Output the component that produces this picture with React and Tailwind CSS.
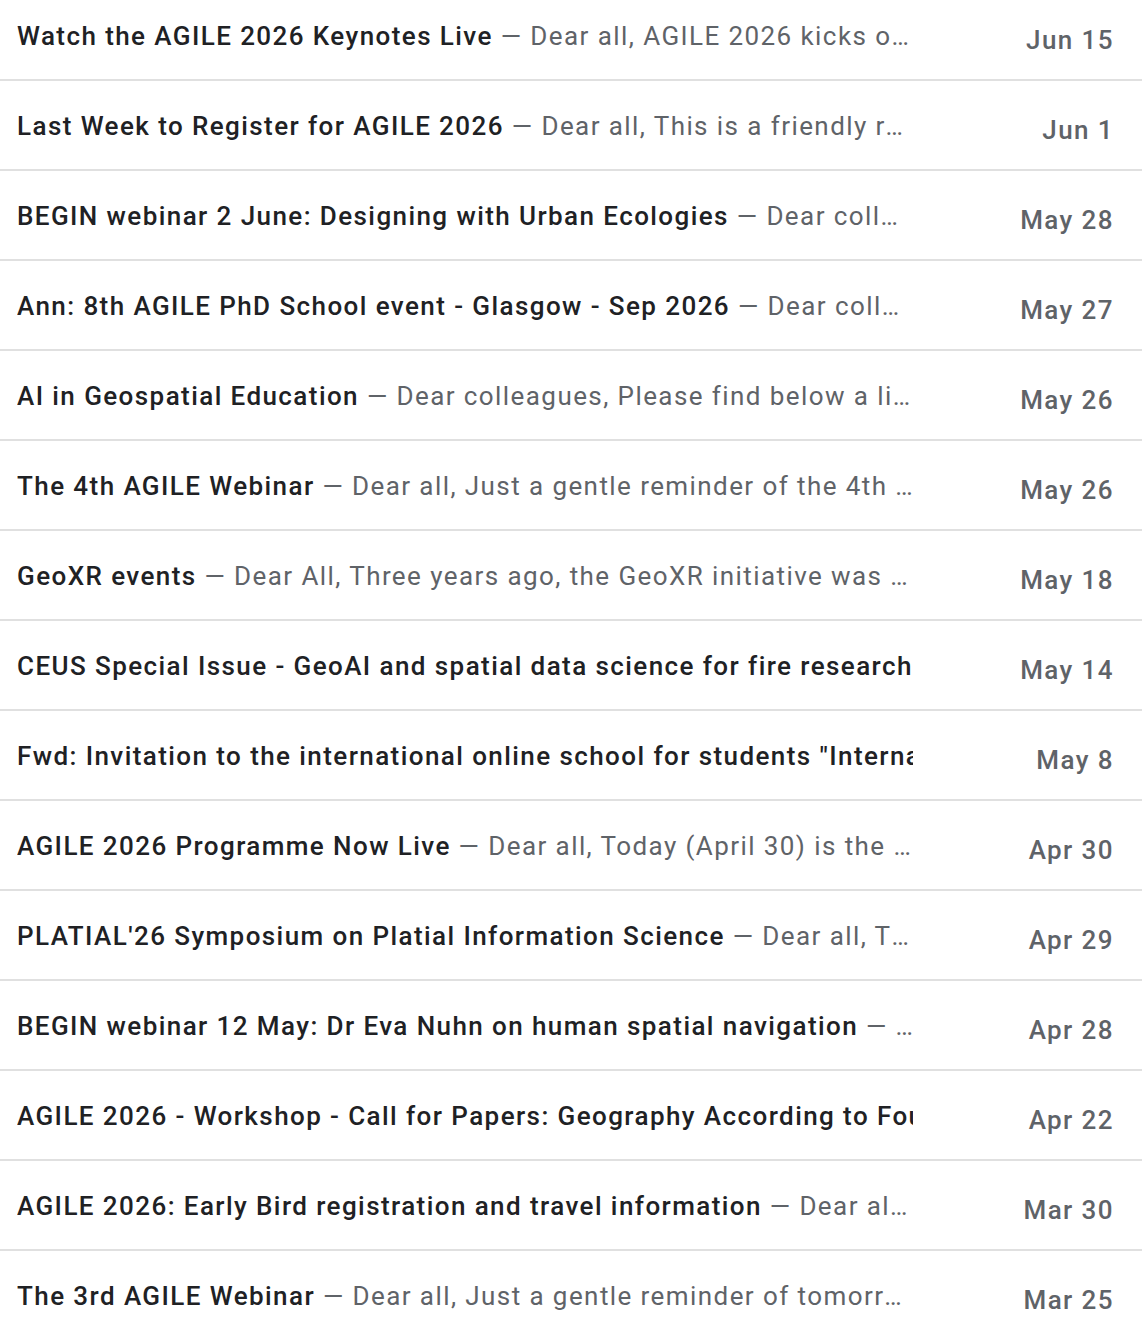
import React from 'react'

const messages = [
  { title: 'Watch the AGILE 2026 Keynotes Live', snippet: 'Dear all, AGILE 2026 kicks off next week and all keynotes will be streamed live', date: 'Jun 15' },
  { title: 'Last Week to Register for AGILE 2026', snippet: 'Dear all, This is a friendly reminder that registration closes soon', date: 'Jun 1' },
  { title: 'BEGIN webinar 2 June: Designing with Urban Ecologies', snippet: 'Dear colleagues, We are pleased to invite you', date: 'May 28' },
  { title: 'Ann: 8th AGILE PhD School event - Glasgow - Sep 2026', snippet: 'Dear colleagues, We are happy to announce', date: 'May 27' },
  { title: 'AI in Geospatial Education', snippet: 'Dear colleagues, Please find below a link to the survey on AI in education', date: 'May 26' },
  { title: 'The 4th AGILE Webinar', snippet: 'Dear all, Just a gentle reminder of the 4th AGILE webinar taking place tomorrow', date: 'May 26' },
  { title: 'GeoXR events', snippet: 'Dear All, Three years ago, the GeoXR initiative was launched to bring together', date: 'May 18' },
  { title: 'CEUS Special Issue - GeoAI and spatial data science for fire research', snippet: 'Dear colleagues, We invite submissions', date: 'May 14' },
  { title: 'Fwd: Invitation to the international online school for students "International Geospatial Summer School"', snippet: 'Dear colleagues', date: 'May 8' },
  { title: 'AGILE 2026 Programme Now Live', snippet: 'Dear all, Today (April 30) is the day the programme goes live', date: 'Apr 30' },
  { title: "PLATIAL'26 Symposium on Platial Information Science", snippet: 'Dear all, The symposium', date: 'Apr 29' },
  { title: 'BEGIN webinar 12 May: Dr Eva Nuhn on human spatial navigation', snippet: 'Dear colleagues', date: 'Apr 28' },
  { title: 'AGILE 2026 - Workshop - Call for Papers: Geography According to Foundation Models', snippet: 'Dear all', date: 'Apr 22' },
  { title: 'AGILE 2026: Early Bird registration and travel information', snippet: 'Dear all, Early bird registration', date: 'Mar 30' },
  { title: 'The 3rd AGILE Webinar', snippet: 'Dear all, Just a gentle reminder of tomorrow\u2019s AGILE webinar on', date: 'Mar 25' },
]

const Row = ({ msg }) => (
  <div className="flex items-center h-[90px] border-b-2 border-[#e0e0e0] pl-[17px] pr-[28px]">
    <div className="flex-1 min-w-0 flex overflow-hidden whitespace-nowrap pt-[2px]">
      <span className="shrink-0 font-medium text-[#202124]">{msg.title}</span>
      <span className="min-w-0 truncate text-[#5f6368]">&nbsp;{'\u2014'} {msg.snippet}</span>
    </div>
    <div className="w-[201px] shrink-0 text-right font-medium text-[#5f6368] pt-[9px]">{msg.date}</div>
  </div>
)

export default function App() {
  return (
    <div className="bg-white min-h-screen overflow-hidden" style={{ fontFamily: 'Roboto, "Noto Sans", sans-serif' }}>
      <div className="-mt-[9px] text-[26px] leading-[32px] tracking-[1.42px]">
        {messages.map((m, i) => (
          <Row key={i} msg={m} />
        ))}
      </div>
    </div>
  )
}
